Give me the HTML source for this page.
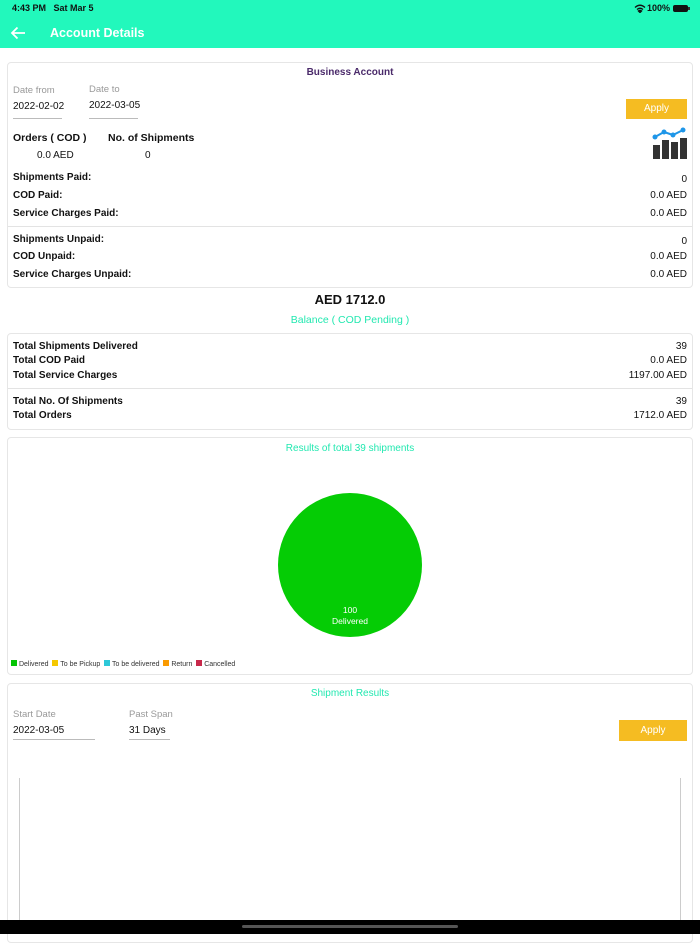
<!DOCTYPE html>
<html><head><style>
*{margin:0;padding:0;box-sizing:border-box}
body{width:700px;height:934px;background:#fff;font-family:"Liberation Sans",sans-serif;position:relative;overflow:hidden;color:#111}
.a{position:absolute;white-space:nowrap}
.card{position:absolute;border:1px solid #e6e6e6;border-radius:4px;background:#fff}
.b{font-weight:bold;font-size:10px}
.s{font-size:10px}
.r{right:13px;text-align:right}
.lbl{color:#999;font-size:9.5px}
.ul{position:absolute;height:1px;background:#bbb}
.hr{position:absolute;height:1px;background:#e3e3e3;left:8px;right:8px}
</style></head><body>
<div class="a" style="left:0;top:0;width:700px;height:48px;background:#22f8bc"></div>
<div class="a" style="left:12px;top:3px;font-size:9px;font-weight:bold">4:43 PM&nbsp;&nbsp;&nbsp;Sat Mar 5</div>
<div class="a" style="left:647px;top:3px;font-size:9px;font-weight:bold">100%</div>
<svg class="a" style="left:634px;top:4px" width="12" height="9" viewBox="0 0 12 9"><path d="M1 3.5Q6-1 11 3.5M3 5.5Q6 3 9 5.5M6 8.5L4.5 7Q6 6 7.5 7Z" stroke="#111" stroke-width="1.4" fill="none"/></svg>
<div class="a" style="left:673px;top:5px;width:15px;height:7px;background:#111;border-radius:2px"></div>
<div class="a" style="left:688px;top:7px;width:1.5px;height:3px;background:#333"></div>
<svg class="a" style="left:10px;top:26px" width="16" height="14" viewBox="0 0 16 14"><path d="M15 7H2M7.5 1.5L2 7l5.5 5.5" stroke="#fff" stroke-width="1.8" fill="none"/></svg>
<div class="a" style="left:50px;top:26px;color:#fff;font-size:12.5px;font-weight:bold">Account Details</div>

<div class="card" style="left:7px;top:62px;width:686px;height:226px"></div>
<div class="a" style="left:0;width:700px;text-align:center;top:67px;font-size:10px;color:#4a2a6a;font-weight:bold">Business Account</div>
<div class="a lbl" style="left:13px;top:85px">Date from</div>
<div class="a lbl" style="left:89px;top:84px">Date to</div>
<div class="a s" style="left:13px;top:101px">2022-02-02</div>
<div class="a s" style="left:89px;top:100px">2022-03-05</div>
<div class="ul" style="left:13px;top:118px;width:49px"></div>
<div class="ul" style="left:89px;top:118px;width:49px"></div>
<div class="a" style="left:626px;top:99px;width:61px;height:20px;background:#f5bc22;color:#fff;font-size:10px;text-align:center;line-height:20px">Apply</div>
<svg class="a" style="left:652px;top:126px" width="36" height="33" viewBox="0 0 36 33"><rect x="1" y="19" width="7" height="14" fill="#333"/><rect x="10" y="14" width="7" height="19" fill="#333"/><rect x="19" y="16" width="7" height="17" fill="#333"/><rect x="28" y="12" width="7" height="21" fill="#333"/><path d="M3 11L12 6L21 9L31 4" stroke="#1e96e8" stroke-width="2" fill="none"/><circle cx="3" cy="11" r="2.5" fill="#1e96e8"/><circle cx="12" cy="6" r="2.5" fill="#1e96e8"/><circle cx="21" cy="9" r="2.5" fill="#1e96e8"/><circle cx="31" cy="4" r="2.5" fill="#1e96e8"/></svg>
<div class="a b" style="left:13px;top:132px;font-size:10.5px">Orders ( COD )</div>
<div class="a b" style="left:108px;top:132px;font-size:10.5px">No. of Shipments</div>
<div class="a s" style="left:37px;top:150px">0.0 AED</div>
<div class="a s" style="left:145px;top:150px">0</div>
<div class="a b" style="left:13px;top:172px">Shipments Paid:</div><div class="a s r" style="top:174px">0</div>
<div class="a b" style="left:13px;top:190px">COD Paid:</div><div class="a s r" style="top:190px">0.0 AED</div>
<div class="a b" style="left:13px;top:208px">Service Charges Paid:</div><div class="a s r" style="top:208px">0.0 AED</div>
<div class="hr" style="top:226px"></div>
<div class="a b" style="left:13px;top:234px">Shipments Unpaid:</div><div class="a s r" style="top:236px">0</div>
<div class="a b" style="left:13px;top:251px">COD Unpaid:</div><div class="a s r" style="top:251px">0.0 AED</div>
<div class="a b" style="left:13px;top:269px">Service Charges Unpaid:</div><div class="a s r" style="top:269px">0.0 AED</div>

<div class="a" style="left:0;width:700px;text-align:center;top:292px;font-size:13px;font-weight:bold">AED 1712.0</div>
<div class="a" style="left:0;width:700px;text-align:center;top:314px;font-size:10.5px;color:#22e8b0">Balance ( COD Pending )</div>

<div class="card" style="left:7px;top:333px;width:686px;height:97px"></div>
<div class="a b" style="left:13px;top:341px">Total Shipments Delivered</div><div class="a s r" style="top:341px">39</div>
<div class="a b" style="left:13px;top:355px">Total COD Paid</div><div class="a s r" style="top:355px">0.0 AED</div>
<div class="a b" style="left:13px;top:370px">Total Service Charges</div><div class="a s r" style="top:370px">1197.00 AED</div>
<div class="hr" style="top:388px"></div>
<div class="a b" style="left:13px;top:396px">Total No. Of Shipments</div><div class="a s r" style="top:396px">39</div>
<div class="a b" style="left:13px;top:410px">Total Orders</div><div class="a s r" style="top:410px">1712.0 AED</div>

<div class="card" style="left:7px;top:437px;width:686px;height:238px"></div>
<div class="a" style="left:0;width:700px;text-align:center;top:443px;font-size:10px;color:#22e8b0">Results of total 39 shipments</div>
<div class="a" style="left:278px;top:493px;width:144px;height:144px;border-radius:50%;background:#05cc05"></div>
<div class="a" style="left:300px;width:100px;text-align:center;top:605px;font-size:8.5px;color:#fff;line-height:11px">100<br>Delivered</div>
<div class="a" style="left:11px;top:660px;font-size:7px;color:#333;line-height:9px">
<span style="display:inline-block;width:6px;height:6px;background:#05c505"></span> Delivered&nbsp;
<span style="display:inline-block;width:6px;height:6px;background:#f5c800"></span> To be Pickup&nbsp;
<span style="display:inline-block;width:6px;height:6px;background:#2ec8d8"></span> To be delivered&nbsp;
<span style="display:inline-block;width:6px;height:6px;background:#fa9a00"></span> Return&nbsp;
<span style="display:inline-block;width:6px;height:6px;background:#c8284a"></span> Cancelled</div>

<div class="card" style="left:7px;top:683px;width:686px;height:260px"></div>
<div class="a" style="left:0;width:700px;text-align:center;top:688px;font-size:10px;color:#22e8b0">Shipment Results</div>
<div class="a lbl" style="left:13px;top:709px">Start Date</div>
<div class="a lbl" style="left:129px;top:709px">Past Span</div>
<div class="a s" style="left:13px;top:725px">2022-03-05</div>
<div class="a s" style="left:129px;top:725px">31 Days</div>
<div class="ul" style="left:13px;top:739px;width:82px"></div>
<div class="ul" style="left:129px;top:739px;width:41px"></div>
<div class="a" style="left:619px;top:720px;width:68px;height:21px;background:#f5bc22;color:#fff;font-size:10px;text-align:center;line-height:21px">Apply</div>
<div class="a" style="left:19px;top:778px;width:1px;height:145px;background:#ccc"></div>
<div class="a" style="left:680px;top:778px;width:1px;height:145px;background:#ccc"></div>
<div class="a" style="left:0;top:920px;width:700px;height:14px;background:#000"></div>
<div class="a" style="left:242px;top:925px;width:216px;height:3px;border-radius:2px;background:#555"></div>
</body></html>
